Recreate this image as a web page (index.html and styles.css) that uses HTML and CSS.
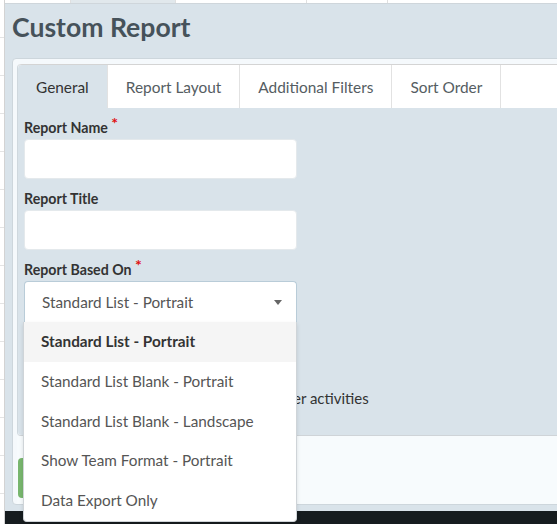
FILE: index.html
```html
<!DOCTYPE html>
<html lang="en">
<head>
  <meta charset="UTF-8" />
  <meta name="viewport" content="width=device-width, initial-scale=1.0"/>
  <title>Custom Report</title>
  <link rel="stylesheet" href="styles.css">
</head>
<body>
  <div class="screen">
    <div class="behind-side"></div>
    <div class="main">
      <div class="behind-top">
        <span class="cell cell-a"></span>
        <span class="cell cell-b"></span>
        <span class="cell cell-c"></span>
        <span class="cell cell-d"></span>
      </div>

      <!-- Modal -->
      <div class="modal">
        <h1 class="modal-title">Custom Report</h1>
        <div class="panel">
          <div class="tab-group">
            <ul class="tabs">
              <li class="tab active">General</li>
              <li class="tab">Report Layout</li>
              <li class="tab">Additional Filters</li>
              <li class="tab">Sort Order</li>
              <li class="tab-fill"></li>
            </ul>
            <div class="tab-body">
              <label class="field-label">Report Name <span class="req">*</span></label>
              <input class="field-input" type="text">

              <label class="field-label">Report Title</label>
              <input class="field-input" type="text">

              <label class="field-label">Report Based On <span class="req">*</span></label>
              <div class="select-wrap">
                <div class="select-box">
                  <span>Standard List - Portrait</span>
                  <span class="caret"></span>
                </div>
                <ul class="select-menu">
                  <li class="option selected">Standard List - Portrait</li>
                  <li class="option">Standard List Blank - Portrait</li>
                  <li class="option">Standard List Blank - Landscape</li>
                  <li class="option">Show Team Format - Portrait</li>
                  <li class="option">Data Export Only</li>
                </ul>
              </div>

              <div class="check-row">
                <span class="check"></span>
                <span>Include participants registered for other activities</span>
              </div>
            </div>
          </div>
          <div class="panel-footer">
            <button class="btn-save">Save Report</button>
          </div>
        </div>
      </div>

      <div class="taskbar"></div>
    </div>
  </div>
</body>
</html>
```

FILE: styles.css
```css
body { margin: 0; font-family: Lato, "Open Sans", sans-serif; background: #fff; overflow: hidden; }
.screen { display: flex; height: 524px; }

/* page behind the modal */
.behind-side { width: 4px; border-right: 1px solid #d3d3d3; background: repeating-linear-gradient(#fff 0, #fff 37px, #e4e4e4 37px, #e4e4e4 38px); }
.main { flex: 1; display: flex; flex-direction: column; min-width: 0; }
.behind-top { display: flex; height: 3px; border-bottom: 1px solid #cfd6db; }
.cell { border-right: 1px solid #e0e0e0; }
.cell-a { width: 65px; }
.cell-b { width: 104px; background: #e1e8ec; }
.cell-c { width: 130px; }
.cell-d { width: 80px; }

/* Modal */
.modal { flex: 1; display: flex; flex-direction: column; background: #d9e3ea; padding: 7px 0 6px 7px; min-height: 0; }
.modal-title { margin: 0 0 15px 0; font-size: 26.6px; line-height: 32px; font-weight: 700; color: #46525a; }
.panel { flex: 1; display: flex; flex-direction: column; margin-right: -20px; background: #f5f9fc; border: 1px solid #cdd6dc; border-radius: 4px; padding: 5px 0 0 4px; }
.tab-group { flex: 1; display: flex; flex-direction: column; border-left: 1px solid #cfd8de; border-bottom: 1px solid #cfd4d8; border-radius: 4px 0 0 4px; }
.tabs { display: flex; margin: 0; padding: 0; list-style: none; height: 43px; border-top: 1px solid #d4d4d4; background: #fff; border-radius: 4px 0 0 0; }
.tab { padding: 0 18px; line-height: 44px; font-size: 15.4px; color: #555d62; border-right: 1px solid #e2e2e2; }
.tab.active { background: #d9e3ea; color: #333; border-radius: 4px 0 0 0; }
.tab-fill { flex: 1; }
.tab-body { flex: 1; background: #d9e3ea; padding: 11px 7px 0 6px; border-radius: 0 0 0 4px; }

.field-label { display: block; font-size: 14.2px; line-height: 18px; font-weight: 700; color: #333; margin-bottom: 2px; }
.req { position: relative; top: -4px; line-height: 0; color: #e01010; font-size: 16px; }
.field-input { display: block; box-sizing: border-box; width: 273px; height: 40px; margin: 0 0 11px 0; border: 1px solid #e4e9ec; border-radius: 4px; background: #fff; }

.select-wrap { position: relative; width: 273px; }
.select-box { box-sizing: border-box; height: 41px; display: flex; align-items: center; justify-content: space-between; padding: 0 14px 0 17px; background: #fff; border: 1px solid #b9ccd8; border-bottom: none; border-radius: 4px 4px 0 0; font-size: 15.3px; color: #555; }
.caret { width: 0; height: 0; border-left: 4.5px solid transparent; border-right: 4.5px solid transparent; border-top: 5px solid #666; }
.select-menu { position: absolute; top: 100%; left: -1px; width: 272px; margin: 0; padding: 0; list-style: none; background: #fff; border: 1px solid #cfd4d8; border-top: none; border-radius: 0 0 4px 4px; box-shadow: 0 2px 4px rgba(0,0,0,0.12); z-index: 5; }
.option { height: 39.8px; line-height: 39.8px; padding-left: 17px; font-size: 15.3px; color: #555; }
.option.selected { background: #f5f5f5; font-weight: 700; color: #333; }

.check-row { display: flex; align-items: center; gap: 7px; margin-top: 66px; font-size: 15px; line-height: 20px; color: #333; }
.check { width: 13px; height: 13px; background: #fff; border: 1px solid #999; border-radius: 2px; }

.panel-footer { height: 68px; background: #f7fbfd; padding: 22px 0 0 1px; box-sizing: border-box; }
.btn-save { height: 40px; padding: 0 20px; border: none; border-radius: 4px; background: #78b66e; color: #fff; font-family: inherit; font-size: 14px; }

.taskbar { height: 13px; background: #161c1f; }
```
